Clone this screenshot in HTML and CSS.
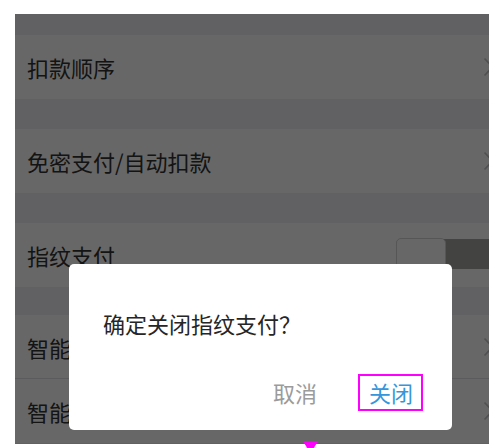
FILE: index.html
```html
<!DOCTYPE html>
<html lang="zh-CN">
<head>
<meta charset="utf-8">
<title>指纹支付</title>
<link rel="stylesheet" href="styles.css">
</head>
<body>
<div class="screen">
  <div class="gap gap-top"></div>
  <div class="row">
    <span class="label">扣款顺序</span>
    <svg class="chev" width="11" height="20" viewBox="0 0 11 20"><path d="M1.5 1.5 L9.5 10 L1.5 18.5" fill="none" stroke="#c7c7cc" stroke-width="1.6"/></svg>
  </div>
  <div class="gap"></div>
  <div class="row">
    <span class="label">免密支付/自动扣款</span>
    <svg class="chev" width="11" height="20" viewBox="0 0 11 20"><path d="M1.5 1.5 L9.5 10 L1.5 18.5" fill="none" stroke="#c7c7cc" stroke-width="1.6"/></svg>
  </div>
  <div class="gap"></div>
  <div class="row">
    <span class="label">指纹支付</span>
    <div class="toggle"><div class="knob"></div></div>
  </div>
  <div class="gap gap-sm"></div>
  <div class="row row-line">
    <span class="label">智能</span>
    <svg class="chev" width="11" height="20" viewBox="0 0 11 20"><path d="M1.5 1.5 L9.5 10 L1.5 18.5" fill="none" stroke="#c7c7cc" stroke-width="1.6"/></svg>
  </div>
  <div class="row">
    <span class="label">智能</span>
    <svg class="chev" width="11" height="20" viewBox="0 0 11 20"><path d="M1.5 1.5 L9.5 10 L1.5 18.5" fill="none" stroke="#c7c7cc" stroke-width="1.6"/></svg>
  </div>
  <div class="mask"></div>
  <div class="dialog">
    <div class="dialog-title">确定关闭指纹支付？</div>
    <div class="dialog-actions">
      <span class="btn btn-cancel">取消</span>
      <span class="btn btn-ok">关闭</span>
    </div>
  </div>
</div>
<div class="marker"></div>
</body>
</html>
```
FILE: styles.css
```css
html, body {
  margin: 0;
  padding: 0;
  background: #fff;
  overflow: hidden;
  height: 448px;
}
body {
  font-family: "Noto Sans CJK SC", "Noto Sans", sans-serif;
  position: relative;
}
.screen {
  position: relative;
  margin: 14px 0 0 15px;
  width: 474px;
  height: 430px;
  overflow: hidden;
  background: #efeff4;
  display: flex;
  flex-direction: column;
}
.gap {
  height: 30px;
  flex: none;
  background: #efeff4;
}
.gap-top { height: 21px; }
.gap-sm { height: 28px; }
.row {
  flex: none;
  height: 64px;
  background: #fff;
  display: flex;
  align-items: center;
  justify-content: space-between;
  padding-left: 12px;
  box-sizing: border-box;
}
.row-line { border-bottom: 1px solid #e2e2e6; }
.label {
  font-size: 22px;
  color: #333;
  line-height: 30px;
  white-space: nowrap;
}
.chev {
  flex: none;
  margin-right: -5px;
}
.toggle {
  flex: none;
  width: 110px;
  height: 30px;
  margin-right: -17px;
  margin-top: -3px;
  background: #a6a6a2;
  border-radius: 5px;
  display: flex;
}
.knob {
  width: 50px;
  height: 31px;
  margin-top: -1px;
  box-sizing: border-box;
  background: #fff;
  border: 1px solid #d4d4d4;
  border-radius: 5px;
}
.mask {
  position: absolute;
  inset: 0;
  background: rgba(0, 0, 0, 0.596);
}
.dialog {
  position: absolute;
  left: 54px;
  top: 250px;
  width: 383px;
  height: 166px;
  background: #fff;
  border-radius: 5px;
  display: flex;
  flex-direction: column;
}
.dialog-title {
  margin: 44px 0 0 34px;
  font-size: 22px;
  line-height: 30px;
  color: #262626;
}
.dialog-actions {
  margin-top: 36px;
  display: flex;
  justify-content: flex-end;
  align-items: center;
  gap: 41px;
  padding-right: 29px;
}
.btn {
  font-size: 22px;
  line-height: 33px;
}
.btn-cancel { color: #9b9b9b; }
.btn-ok {
  color: #3596dc;
  border: 2px solid #ff00ff;
  padding: 0 8px 0 9px;
}
.marker {
  position: absolute;
  left: 303px;
  top: 441px;
  width: 15px;
  height: 7px;
  background: #ff00ff;
  clip-path: polygon(0 0, 100% 0, 72% 100%, 28% 100%);
}
```
